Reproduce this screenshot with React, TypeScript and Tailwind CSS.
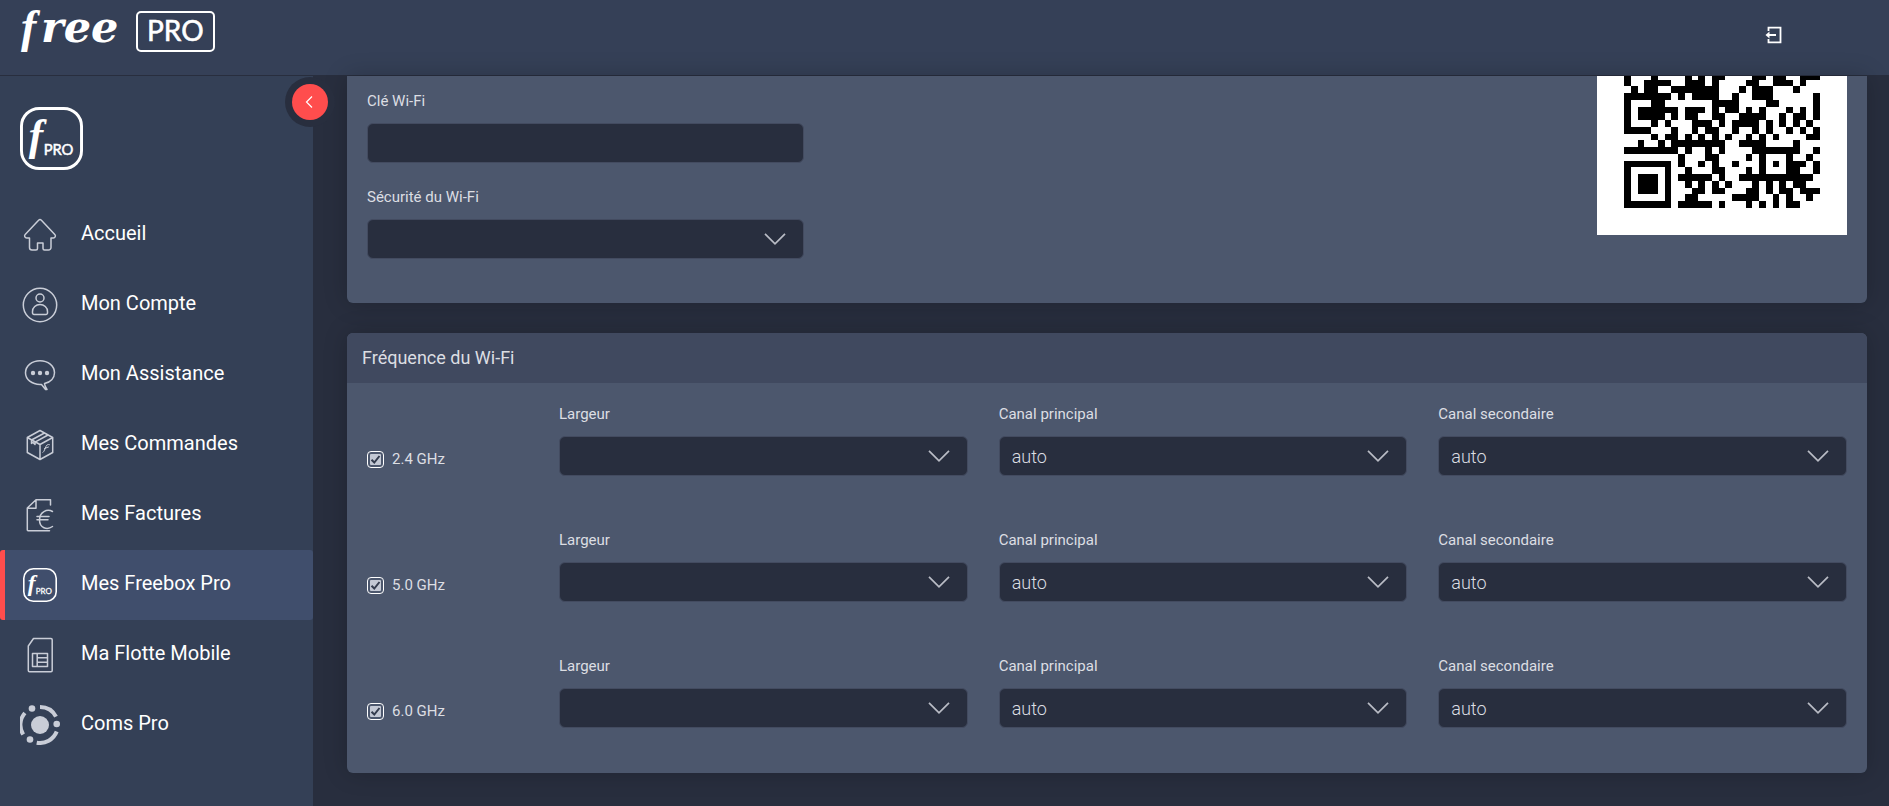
import { useState } from 'react';
import type { ReactNode } from 'react';

interface MenuItem {
  label: string;
  icon: ReactNode;
  active?: boolean;
}

interface Band {
  id: string;
  name: string;
}

const BANDS: Band[] = [
  { id: 'b24', name: '2.4 GHz' },
  { id: 'b50', name: '5.0 GHz' },
  { id: 'b60', name: '6.0 GHz' },
];

// one string per module row, '#' is a dark module
const QR_ROWS = [
  '#...#....#.#.##....##.##..###',
  '#..####..###.#....##..###.#..',
  '.#.##..#######...#.###...#...',
  '#######.#.####..#..###......#',
  '#...##.......####....##.....#',
  '#.######.###.#.##.#.#...#.#.#',
  '#.####.#.##..##..####..#.##.#',
  '#...#.#...###.#.####.#.#.#.#.',
  '####...#..#.##..#..#.#..#.#.#',
  '....#.##.#.#.#.#..#.#.#....##',
  '..#..#.########..####....#...',
  '########.#..#.#....#######..#',
  '........#...##....#.#...#..#.',
  '#######.#..#.#..#...#.#.###.#',
  '#.....#..#...##...#.#...##..#',
  '#.###.#.#####.#..###########.',
  '#.###.#..#.#.#.#...#.#.#.##..',
  '#.###.#...##.##...##.#.##.###',
  '#.....#..##.....####..#.#..#.',
  '#######.#####.#...#.#.#.##...',
];

function QrCode() {
  return (
    <svg viewBox="0 13.47 37 23.53" className="h-[159px] w-[250px] bg-white" shapeRendering="crispEdges" role="img" aria-label="QR code Wi-Fi">
      {QR_ROWS.map((row, y) =>
        row.split('').map((cell, x) =>
          cell === '#' ? <rect key={`${x}-${y}`} x={x + 4} y={y + 13} width="1" height="1" fill="#000" /> : null
        )
      )}
    </svg>
  );
}

function FreeProLogo() {
  return (
    <svg width="206" height="60" viewBox="0 0 206 60" fill="#fff" role="img" aria-label="free PRO">
      <text x="12" y="42" fontFamily="Liberation Serif" fontSize="46" fontWeight="700" fontStyle="italic">f</text>
      <text x="32" y="42" fontFamily="DejaVu Serif" fontSize="43" fontWeight="700" fontStyle="italic">ree</text>
      <rect x="128" y="12" width="77" height="39" rx="4" fill="none" stroke="#fff" strokeWidth="2" />
      <text x="138" y="41" fontFamily="Lato" fontSize="28" stroke="#fff" strokeWidth="0.6">PRO</text>
    </svg>
  );
}

function BadgeIcon({ className, stroke }: { className: string; stroke: number }) {
  return (
    <svg viewBox="0 0 64 64" className={className} fill="#fff" aria-hidden="true">
      <rect x="1.5" y="1.5" width="61" height="61" rx="18" fill="none" stroke="#fff" strokeWidth={stroke} />
      <text x="9" y="44" fontFamily="Liberation Serif" fontSize="44" fontWeight="700" fontStyle="italic">f</text>
      <text x="24" y="49" fontFamily="Lato" fontSize="15" stroke="#fff" strokeWidth="0.5">PRO</text>
    </svg>
  );
}

function LineIcon({ children }: { children: ReactNode }) {
  return (
    <svg viewBox="0 0 40 40" className="size-10" fill="none" stroke="#c9cdd7" strokeWidth="1.5" strokeLinejoin="round" strokeLinecap="round" aria-hidden="true">
      {children}
    </svg>
  );
}

const MENU: MenuItem[] = [
  {
    label: 'Accueil',
    icon: (
      <LineIcon>
        <path d="M18.6 5.2a2 2 0 0 1 2.8 0L34.8 19.4c1.3 1.6.3 3.6-1.5 3.6H31v9.5a2.5 2.5 0 0 1-2.5 2.5h-4a1.5 1.5 0 0 1-1.5-1.5V28h-5.5v5.5A1.5 1.5 0 0 1 16 35h-4a2.5 2.5 0 0 1-2.5-2.5V23H6.7c-1.8 0-2.8-2-1.5-3.6z" />
      </LineIcon>
    ),
  },
  {
    label: 'Mon Compte',
    icon: (
      <LineIcon>
        <circle cx="20" cy="20" r="16.7" />
        <circle cx="20" cy="13" r="4" />
        <path d="M12.5 28v-1.5a7.5 7 0 0 1 15 0V28a1.5 1.5 0 0 1-1.5 1.5H14a1.5 1.5 0 0 1-1.5-1.5z" />
      </LineIcon>
    ),
  },
  {
    label: 'Mon Assistance',
    icon: (
      <LineIcon>
        <path d="M24.5 28.6C30.5 27.2 34.5 23 34.5 17.8 34.5 11 28 5.7 20 5.7S5.5 11 5.5 17.8 12 29.5 20 29.5l1.5-.1c1.5 1.6 2.3 3.2 4 5h1.5c-1.2-1.8-2.3-4-2.5-5.8z" />
        <g fill="#c9cdd7" stroke="none">
          <circle cx="13" cy="18" r="2.2" />
          <circle cx="20" cy="18" r="2.2" />
          <circle cx="27" cy="18" r="2.2" />
        </g>
      </LineIcon>
    ),
  },
  {
    label: 'Mes Commandes',
    icon: (
      <LineIcon>
        <path d="M20 5.5 32.7 12.5V27.5L20 34.5 7.3 27.5V12.5zM7.3 12.5 20 19.5l12.7-7M20 19.5v15M11.5 15 24.5 8M15 17.2 28 10M11.5 15v3.5l1.5-1 2 2v-2.3" />
        <path d="M23 27.5c1.5-.5 2.5-6.5 4-7.5 1-.7 1.8-.5 2.5-.3M24.5 23.5l4-1.5" strokeWidth="1" />
      </LineIcon>
    ),
  },
  {
    label: 'Mes Factures',
    icon: (
      <LineIcon>
        <path d="M29.5 35.7H8a.7.7 0 0 1-.7-.7V13L16 4.7h14.5V10M7.3 13.3H16V4.7" />
        <path d="M32.5 16.5c-5.5-3-13 .5-13 8.5s7.5 10.5 13 6.5M17 21.5h12M17 24.8h11" />
      </LineIcon>
    ),
  },
  { label: 'Mes Freebox Pro', icon: <BadgeIcon className="mx-[3px] size-[34px]" stroke={3} />, active: true },
  {
    label: 'Ma Flotte Mobile',
    icon: (
      <LineIcon>
        <path d="M8.3 11 13.5 3.5H31a1.2 1.2 0 0 1 1.2 1.2V35.5a1.2 1.2 0 0 1-1.2 1.2H9.5A1.2 1.2 0 0 1 8.3 35.5z" />
        <path d="M12.5 18.5h15v13h-15zM17.2 18.5v13M17.2 22.8h10.3M17.2 27.2h10.3" />
      </LineIcon>
    ),
  },
  {
    label: 'Coms Pro',
    icon: (
      <svg viewBox="0 0 40 40" className="size-10" fill="#c9cdd7" aria-hidden="true">
        <circle cx="20" cy="20" r="9" />
        <circle cx="12" cy="3.5" r="3.3" />
        <circle cx="36.7" cy="19" r="3.3" />
        <circle cx="10" cy="34.5" r="3.3" />
        <g fill="none" stroke="#c9cdd7" strokeWidth="4">
          <path d="M20 2a18 18 0 0 1 16 9.7M36.7 26.5A18 18 0 0 1 16.7 37.7M3.2 29.5A18 18 0 0 1 4.9 8" />
        </g>
      </svg>
    ),
  },
];

interface FieldProps {
  id: string;
  label: string;
  options?: string[];
}

function SelectField({ id, label, options = [''] }: FieldProps) {
  return (
    <div>
      <label htmlFor={id} className="block text-[15px] leading-5">{label}</label>
      <div className="relative mt-3">
        <select
          id={id}
          className="block h-10 w-full appearance-none rounded-md border border-[#434b60] bg-[#282e3e] px-3 text-[18px] font-light outline-none"
        >
          {options.map((option) => (
            <option key={option} value={option}>{option}</option>
          ))}
        </select>
        <svg viewBox="0 0 22 12" className="pointer-events-none absolute top-[14px] right-[18px] h-3 w-[22px]" fill="none" stroke="#b9bcc5" strokeWidth="1.7" aria-hidden="true">
          <path d="M1 .8 11 10.8 21 .8" />
        </svg>
      </div>
    </div>
  );
}

function BandRow({ band }: { band: Band }) {
  const [enabled, setEnabled] = useState(true);

  return (
    <div className="grid grid-cols-[161px_1fr_1fr_1fr] gap-x-[31px]">
      <label className="mt-[45px] flex h-5 items-center gap-2 text-[15px] leading-5">
        <span className="relative size-[17px]">
          <input
            type="checkbox"
            checked={enabled}
            onChange={(e) => setEnabled(e.target.checked)}
            className="peer block size-[17px] appearance-none rounded-[4px] border border-white bg-clip-content p-0.5 checked:bg-[#c3c8d4]"
          />
          <svg viewBox="0 0 17 17" className="pointer-events-none invisible absolute inset-0 size-[17px] peer-checked:visible" fill="none" stroke="#343c4e" strokeWidth="2" aria-hidden="true">
            <path d="M4.5 8.7 7.3 11.5 12.5 5" />
          </svg>
        </span>
        {band.name}
      </label>
      <SelectField id={`${band.id}-width`} label="Largeur" />
      <SelectField id={`${band.id}-main`} label="Canal principal" options={['auto']} />
      <SelectField id={`${band.id}-second`} label="Canal secondaire" options={['auto']} />
    </div>
  );
}

export default function App() {
  return (
    <div className="flex min-h-screen flex-col bg-[#282e3e] font-[Roboto,sans-serif] text-[#dcdee3]">
      {/* Top bar */}
      <header className="flex h-[76px] items-start justify-between border-b border-[#282e3e] bg-[#354057] pr-[107px] pl-[9px]">
        <a href="#accueil"><FreeProLogo /></a>
        <button type="button" aria-label="Déconnexion" className="mt-[26px]">
          <svg viewBox="0 0 17 18" className="h-[18px] w-[17px]" fill="none" stroke="#fff" strokeWidth="1.8" aria-hidden="true">
            <path d="M3.5 5V1.7h12v14.6h-12V13M11 9H3" />
            <path d="M.5 9 4.5 5.5v7z" fill="#fff" stroke="none" />
          </svg>
        </button>
      </header>

      <div className="flex grow">
        {/* Sidebar */}
        <aside className="relative w-[313px] shrink-0 bg-[#344056]">
          <button
            type="button"
            aria-label="Réduire le menu"
            className="absolute top-px -right-[22px] flex size-[50px] items-center justify-center rounded-full bg-[#282e3e]"
          >
            <span className="flex size-9 items-center justify-center rounded-full bg-[#ff4d4d]">
              <svg viewBox="0 0 8 12" className="mr-0.5 h-3 w-2" fill="none" stroke="#fff" strokeWidth="1.2" aria-hidden="true">
                <path d="M7 .5 1.5 6 7 11.5" />
              </svg>
            </span>
          </button>
          <a href="#accueil" aria-label="Freebox Pro" className="block pt-[31px] pl-5">
            <BadgeIcon className="size-[63px]" stroke={3} />
          </a>
          <nav className="mt-[30px]">
            {MENU.map((item) => (
              <a
                key={item.label}
                href="#menu"
                className={
                  item.active
                    ? 'flex h-[70px] items-center gap-[21px] rounded-[3px] border-l-[5px] border-[#ff4d4d] bg-[#404e6c] pl-[15px]'
                    : 'flex h-[70px] items-center gap-[21px] pl-5'
                }
              >
                {item.icon}
                <span className="pb-1 text-[20px] leading-6 text-white">{item.label}</span>
              </a>
            ))}
          </nav>
        </aside>

        {/* Content */}
        <main className="flex min-w-0 grow flex-col gap-[30px] pr-[22px] pb-[33px] pl-[34px]">
          <section className="flex justify-between rounded-b-md bg-[#4c576d] px-5 pb-11 shadow-[0_0_25px_rgba(0,0,0,0.2)]">
            <div className="flex w-[437px] flex-col gap-6 pt-[15px]">
              <div>
                <label htmlFor="wifi-key" className="block text-[15px] leading-5">Clé Wi-Fi</label>
                <input
                  id="wifi-key"
                  type="text"
                  className="mt-3 block h-10 w-full rounded-md border border-[#434b60] bg-[#282e3e] px-3 text-[18px] font-light outline-none"
                />
              </div>
              <SelectField id="wifi-security" label="Sécurité du Wi-Fi" />
            </div>
            <QrCode />
          </section>

          <section className="rounded-md bg-[#4c576d] shadow-[0_0_25px_rgba(0,0,0,0.2)]">
            <h2 className="rounded-t-md bg-[#40495f] px-[15px] py-[13px] text-[18px] leading-6">Fréquence du Wi-Fi</h2>
            <div className="flex flex-col gap-[54px] px-5 pt-[21px] pb-[45px]">
              {BANDS.map((band) => (
                <BandRow key={band.id} band={band} />
              ))}
            </div>
          </section>
        </main>
      </div>
    </div>
  );
}
